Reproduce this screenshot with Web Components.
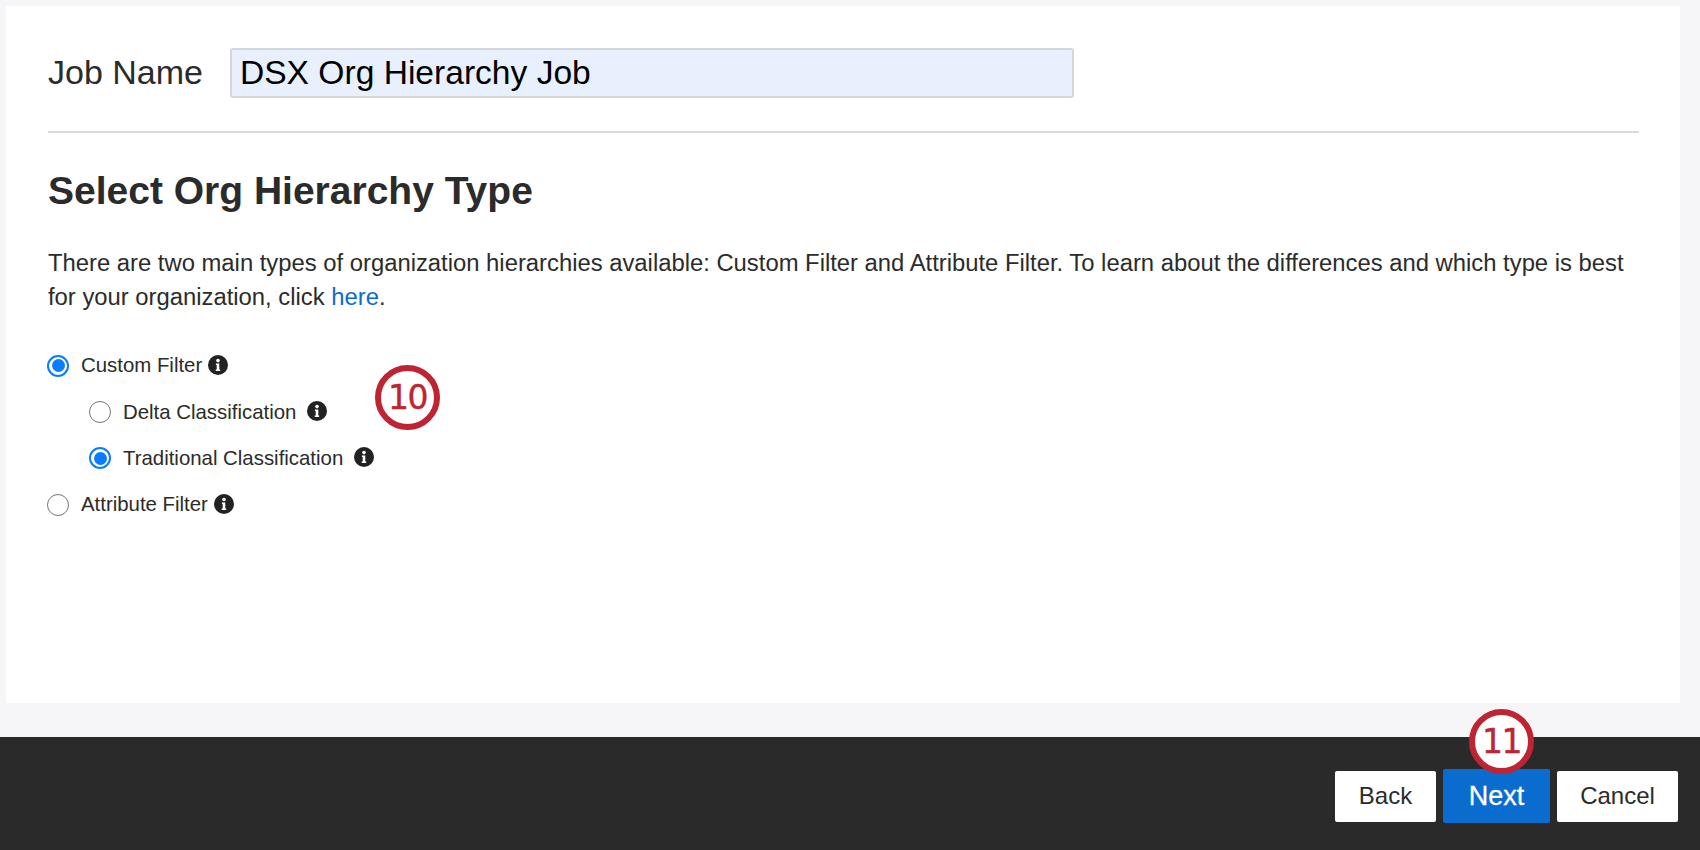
<!DOCTYPE html>
<html><head><meta charset="utf-8"><title>Org Hierarchy Job</title>
<style>
html,body{margin:0;padding:0;height:850px;overflow:hidden;background:#f6f6f9;font-family:"Liberation Sans",Arial,sans-serif;color:#2b2b2b}
</style></head><body>
<job-wizard>
  <job-card slot="main">
    <job-name-field label="Job Name" value="DSX Org Hierarchy Job"></job-name-field>
    <section-heading>Select Org Hierarchy Type</section-heading>
    <intro-text>There are two main types of organization hierarchies available: Custom Filter and Attribute Filter. To learn about the differences and which type is best for your organization, click <a href="#" style="color:#0b6ccf;text-decoration:none">here</a>.</intro-text>
    <radio-group>
      <radio-row checked gap="5.5">Custom Filter</radio-row>
      <radio-row nested gap="11">Delta Classification</radio-row>
      <radio-row nested checked gap="11">Traditional Classification</radio-row>
      <radio-row gap="6.5">Attribute Filter</radio-row>
      <step-badge style="left:327px;top:23px">10</step-badge>
    </radio-group>
  </job-card>
  <wizard-footer slot="footer">
    <wizard-button style="width:101px">Back</wizard-button>
    <wizard-button primary style="width:107px">Next<step-badge style="left:26px;top:-60px">11</step-badge></wizard-button>
    <wizard-button style="width:121px">Cancel</wizard-button>
  </wizard-footer>
</job-wizard>
<script>
function def(name, css, html, extra){
  customElements.define(name, class extends HTMLElement{
    constructor(){super();const s=this.attachShadow({mode:'open'});s.innerHTML='<style>'+css+'</style>'+html;}
    connectedCallback(){if(extra)extra(this,this.shadowRoot);}
  });
}
def('job-wizard',':host{display:flex;flex-direction:column;height:850px}',
  '<slot name="main"></slot><slot name="footer"></slot>');
def('job-card',':host{display:block;box-sizing:border-box;height:697px;margin:6px 20px 0 6px;padding:42px 41px 0 42px;background:#fff}','<slot></slot>');
def('job-name-field',
  ':host{display:flex;gap:27px;height:83px;border-bottom:2px solid #d9d9dc;align-items:flex-start}'+
  '.l{font-size:34px;line-height:49px;color:#2b2b2b}'+
  '.v{box-sizing:border-box;width:844px;height:50px;padding-left:8px;background:#e8f0fe;border:2px solid #d3d7dc;border-radius:3px;font-size:33.6px;line-height:46px;color:#000}',
  '<div class="l"></div><div class="v"></div>',
  (h,s)=>{s.querySelector('.l').textContent=h.getAttribute('label');s.querySelector('.v').textContent=h.getAttribute('value');});
def('section-heading',':host{display:block;margin-top:34px;font-size:39px;line-height:48px;font-weight:700;color:#2b2b2b}','<slot></slot>');
def('intro-text',':host{display:block;margin-top:30.7px;font-size:23.82px;line-height:34px;color:#2b2b2b}','<slot></slot>');
def('radio-group',':host{display:flex;flex-direction:column;position:relative;margin-top:28.8px;gap:0}','<slot></slot>');
def('radio-row',
  ':host{display:flex;align-items:center;height:46.4px;font-size:20.4px;color:#2b2b2b}'+
  ':host([nested]){padding-left:42px}'+
  '.r{box-sizing:border-box;width:22px;height:22px;border-radius:50%;border:1.5px solid #767676;background:#fff;margin:0 12px 0 -1px;display:flex;align-items:center;justify-content:center;flex:none}'+
  ':host([checked]) .r{border:2px solid #0a7cff}'+
  ':host([checked]) .r::after{content:"";width:13px;height:13px;border-radius:50%;background:#0a7cff}'+
  'svg{width:20px;height:20px;flex:none;margin-top:-2px}',
  '<span class="r"></span><span><slot></slot></span><svg viewBox="0 0 20 20"><circle cx="10" cy="10" r="10" fill="#222"/><circle cx="10" cy="5.6" r="1.8" fill="#fff"/><path d="M7.9 8.5h3.4v6h.9v1.6H7.7v-1.6h1V10h-.8z" fill="#fff"/></svg>',
  (h,s)=>{s.querySelector('svg').style.marginLeft=(h.getAttribute('gap')||4)+'px';});
def('step-badge',
  ':host{position:absolute;box-sizing:border-box;width:65px;height:65px;border-radius:50%;border:6px solid #bf2433;background:#fff;color:#bf2433;display:flex;align-items:center;justify-content:center;font-family:"DejaVu Sans",sans-serif;font-size:33px;letter-spacing:-1.5px;font-weight:400;line-height:1;z-index:3;-webkit-text-stroke:.4px #bf2433}','<slot></slot>');
def('wizard-footer',':host{display:flex;justify-content:flex-end;align-items:center;gap:7px;box-sizing:border-box;height:113px;margin-top:34px;padding:5px 22px 0 0;background:#2a2a2a}','<slot></slot>');
def('wizard-button',
  ':host{display:flex;align-items:center;justify-content:center;position:relative;box-sizing:border-box;height:51px;background:#fff;color:#2b2b2b;border-radius:2px;font-size:24px}'+
  ':host([primary]){height:54px;background:#0b6ccf;color:#fff;font-size:27px;-webkit-text-stroke:.3px #fff}','<slot></slot>');
</script>
</body></html>
